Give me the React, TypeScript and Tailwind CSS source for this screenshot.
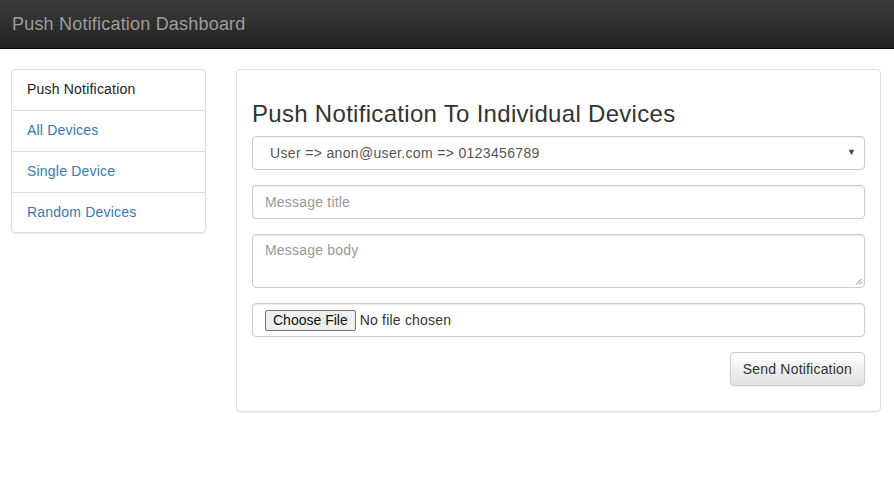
import React from "react";

export default function App() {
  const font = { fontFamily: '"Liberation Sans", Arial, Helvetica, sans-serif' };
  return (
    <div className="w-[894px] h-[481px] bg-white text-[14px] text-[#333] overflow-hidden tracking-[0.2px]" style={font}>
      <div className="h-[49px] bg-gradient-to-b from-[#3c3c3c] to-[#222222] border-b border-[#080808] flex items-center px-[12px]">
        <span className="text-[18px] text-[#9d9d9d] leading-[20px] tracking-[0.2px]">Push Notification Dashboard</span>
      </div>
      <div className="flex pt-[20px] pl-[11px] pr-[13px] gap-[30px]">
        <div className="w-[195px] shrink-0 border border-[#ddd] rounded-[4px] shadow-[0_1px_2px_rgba(0,0,0,0.075)] self-start">
          <div className="px-[15px] pt-[9px] pb-[11px] leading-[20px] text-[#222] border-b border-[#ddd]">Push Notification</div>
          <div className="px-[15px] pt-[9px] pb-[11px] leading-[20px] text-[#337ab7] border-b border-[#ddd]">All Devices</div>
          <div className="px-[15px] pt-[9px] pb-[11px] leading-[20px] text-[#337ab7] border-b border-[#ddd]">Single Device</div>
          <div className="px-[15px] pt-[9px] pb-[10px] leading-[20px] text-[#337ab7]">Random Devices</div>
        </div>
        <div className="flex-1 border border-[#ddd] rounded-[4px] shadow-[0_1px_1px_rgba(0,0,0,0.05)] px-[15px] pt-[31px] pb-[25px]">
          <h3 className="text-[24px] leading-[26px] text-[#333] mb-[9px] tracking-[0.3px]">Push Notification To Individual Devices</h3>
          <div className="h-[34px] border border-[#ccc] rounded-[4px] shadow-[inset_0_1px_1px_rgba(0,0,0,0.075)] flex items-center pl-[17px] pr-[8px] text-[#555] mb-[15px]">
            <span className="flex-1 tracking-[0.34px]">User =&gt; anon@user.com =&gt; 0123456789</span>
            <span className="text-[9px] text-[#444]">▼</span>
          </div>
          <div className="h-[34px] border border-[#ccc] rounded-[4px] shadow-[inset_0_1px_1px_rgba(0,0,0,0.075)] flex items-center px-[12px] text-[#999] mb-[15px]">
            Message title
          </div>
          <div className="relative h-[54px] border border-[#ccc] rounded-[4px] shadow-[inset_0_1px_1px_rgba(0,0,0,0.075)] px-[12px] pt-[5px] text-[#999] leading-[20px] mb-[15px]">
            Message body
            <svg className="absolute right-[2px] bottom-[2px]" width="7" height="7" viewBox="0 0 7 7">
              <path d="M6.5 1 L1 6.5 M6.5 4 L4 6.5" stroke="#888" strokeWidth="1" />
            </svg>
          </div>
          <div className="h-[34px] border border-[#ccc] rounded-[4px] shadow-[inset_0_1px_1px_rgba(0,0,0,0.075)] flex items-center px-[12px] text-[#333] mb-[15px]">
            <span className="h-[21px] px-[7px] flex items-center bg-[#efefef] border border-[#767676] rounded-[2px] text-[#111] text-[14px] mr-[4px] tracking-[0px]">Choose File</span>
            <span className="text-[#333]">No file chosen</span>
          </div>
          <div className="flex justify-end">
            <div className="h-[34px] px-[12px] flex items-center border border-[#ccc] rounded-[4px] bg-gradient-to-b from-white to-[#e0e0e0] shadow-[inset_0_1px_0_rgba(255,255,255,0.15),0_1px_1px_rgba(0,0,0,0.075)] text-[#333]">
              Send Notification
            </div>
          </div>
        </div>
      </div>
    </div>
  );
}
